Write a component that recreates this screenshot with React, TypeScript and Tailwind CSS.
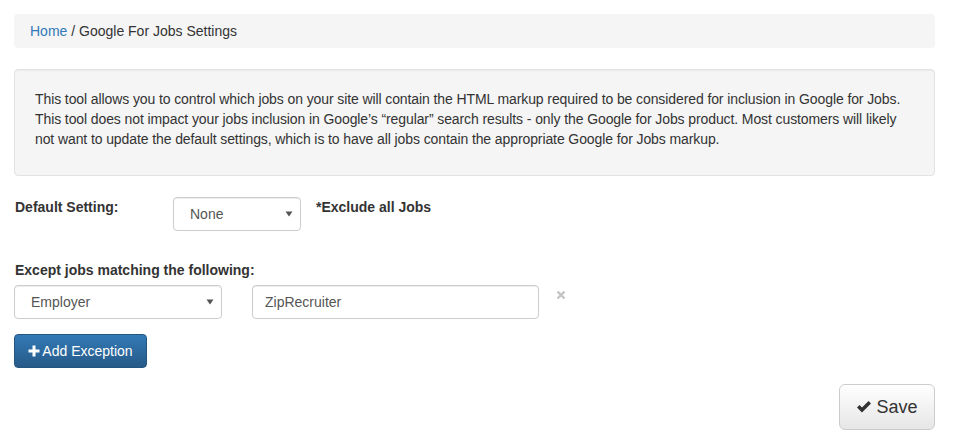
import React from 'react';

const font = { fontFamily: '"Liberation Sans", Arial, sans-serif' };

const Caret = () => (
  <svg width="8" height="6" viewBox="0 0 8 6" className="absolute right-[7px] top-1/2 -translate-y-1/2">
    <path d="M0.5 0.5 L7.5 0.5 L4 5.5 Z" fill="#555" />
  </svg>
);

const FakeSelect = ({ value, className }: { value: string; className: string }) => (
  <div
    className={`relative h-[34px] rounded-[4px] border border-[#ccc] bg-white text-[14px] leading-[20px] text-[#555] flex items-center pl-[16px] shadow-[inset_0_1px_1px_rgba(0,0,0,0.075)] ${className}`}
  >
    {value}
    <Caret />
  </div>
);

export default function App() {
  return (
    <div style={font} className="w-[953px] h-[445px] bg-white pl-[14px] pr-[18px] pt-[14px] text-[14px] leading-[20px] text-[#333]">
      <div className="h-[34px] rounded-[4px] bg-[#f5f5f5] px-[16px] py-[7px]">
        <span className="text-[#337ab7]">Home</span>
        <span> / </span>
        <span>Google For Jobs Settings</span>
      </div>

      <div className="mt-[21px] h-[107px] rounded-[4px] border border-[#e3e3e3] bg-[#f5f5f5] pl-[20px] pr-[10px] pt-[19px] shadow-[inset_0_1px_1px_rgba(0,0,0,0.05)]">
        <p className="whitespace-nowrap tracking-[-0.1px] text-[#333]">
          This tool allows you to control which jobs on your site will contain the HTML markup required to be considered for inclusion in Google for Jobs.
          <br />
          This tool does not impact your jobs inclusion in Google’s “regular” search results - only the Google for Jobs product. Most customers will likely
          <br />
          not want to update the default settings, which is to have all jobs contain the appropriate Google for Jobs markup.
        </p>
      </div>

      <div className="mt-[21px] flex items-start">
        <div className="w-[159px] pl-[1px] font-bold">Default Setting:</div>
        <FakeSelect value="None" className="w-[128px]" />
        <div className="ml-[15px] font-bold">*Exclude all Jobs</div>
      </div>

      <div className="mt-[29px] pl-[1px] font-bold">Except jobs matching the following:</div>
      <div className="mt-[5px] flex items-start">
        <FakeSelect value="Employer" className="w-[208px]" />
        <div className="ml-[30px] h-[34px] w-[287px] rounded-[4px] border border-[#ccc] bg-white pl-[12px] flex items-center text-[#555] shadow-[inset_0_1px_1px_rgba(0,0,0,0.075)]">
          ZipRecruiter
        </div>
        <svg width="10" height="10" viewBox="0 0 10 10" className="ml-[17px] mt-[5px]">
          <path d="M1.5 1.5 L8.5 8.5 M8.5 1.5 L1.5 8.5" stroke="#c4c4c4" strokeWidth="2.4" />
        </svg>
      </div>

      <button className="mt-[15px] flex h-[34px] w-[133px] items-center justify-center rounded-[4px] border border-[#245580] bg-gradient-to-b from-[#337ab7] to-[#265a88] text-[14px] text-white">
        <svg width="12" height="12" viewBox="0 0 12 12" className="mr-[2px]">
          <path d="M4.5 0.5 H7.5 V4.5 H11.5 V7.5 H7.5 V11.5 H4.5 V7.5 H0.5 V4.5 H4.5 Z" fill="#fff" />
        </svg>
        Add Exception
      </button>

      <div className="mt-[16px] flex justify-end">
        <button className="flex h-[46px] w-[96px] items-center justify-center rounded-[6px] border border-[#ccc] bg-gradient-to-b from-white to-[#e6e6e6] text-[18px] text-[#333]">
          <svg width="16" height="14" viewBox="0 0 16 14" className="mr-[4px]">
            <path d="M1 7.5 L3.5 5 L6 7.5 L12.5 1 L15 3.5 L6 12.5 Z" fill="#333" />
          </svg>
          Save
        </button>
      </div>
    </div>
  );
}
